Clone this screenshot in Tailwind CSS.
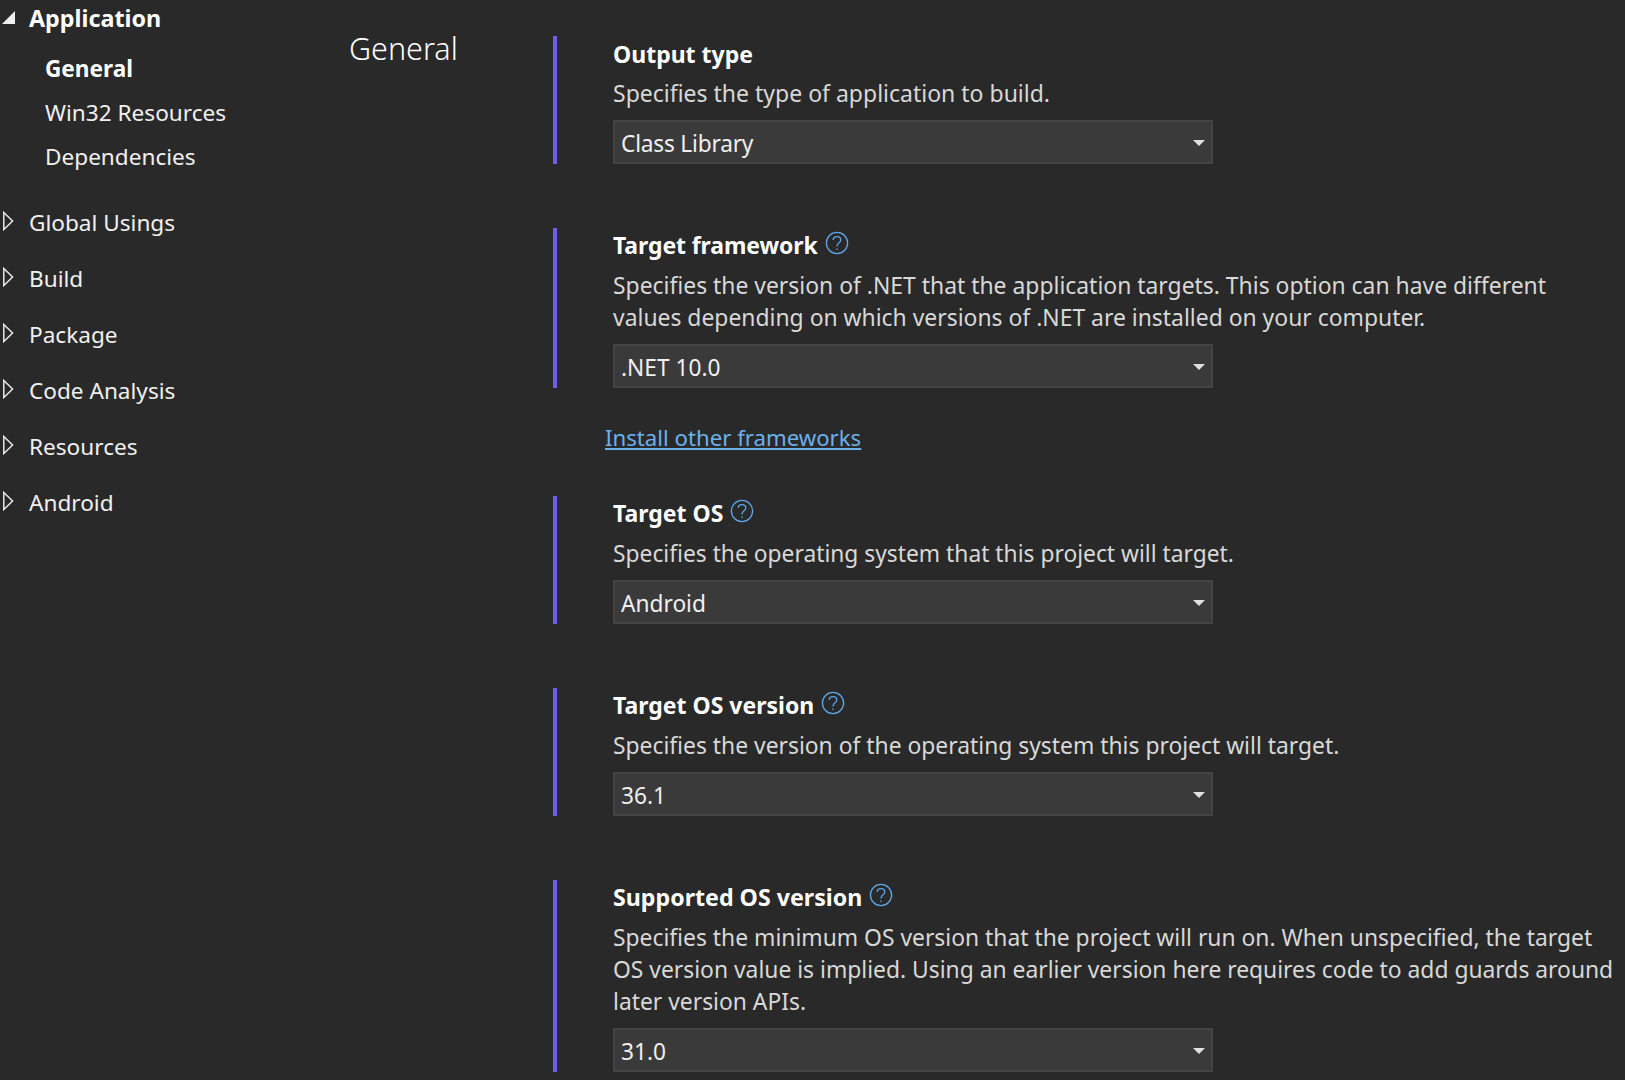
<!DOCTYPE html>
<html lang="en">
  <head>
    <meta charset="UTF-8" />
    <title>Project properties - General</title>
    <script src="https://cdn.jsdelivr.net/npm/@tailwindcss/browser@4"></script>
  </head>
  <body class="bg-[#292929] h-[1080px] overflow-hidden font-['Noto_Sans',sans-serif] text-[23px] text-[#f0f0f0]">
    <div class="flex h-full">
      <!-- tree -->
      <nav class="w-[349px] shrink-0 leading-[44px] text-[22.6px]">
        <div class="flex items-center h-[36px] font-bold text-white text-[23.3px]">
          <svg class="w-[29px] h-[16px] shrink-0 mb-[3px]" viewBox="0 0 29 16"><path d="M2 15 L15 2 V15 Z" fill="#f0f0f0" /></svg>
          Application
        </div>
        <div class="pl-[45px] mt-[11px]">
          <div class="font-bold text-white">General</div>
          <div>Win32 Resources</div>
          <div>Dependencies</div>
        </div>
        <div class="mt-[22px] space-y-[12px]">
          <div class="flex items-center">
            <svg class="w-[29px] h-[20px] shrink-0 mb-[4px]" viewBox="0 0 29 20"><path d="M3.8 1.5 L12.6 10 L3.8 18.5 Z" fill="none" stroke="#e8e8e8" stroke-width="1.5" /></svg>
            Global Usings
          </div>
          <div class="flex items-center">
            <svg class="w-[29px] h-[20px] shrink-0 mb-[4px]" viewBox="0 0 29 20"><path d="M3.8 1.5 L12.6 10 L3.8 18.5 Z" fill="none" stroke="#e8e8e8" stroke-width="1.5" /></svg>
            Build
          </div>
          <div class="flex items-center">
            <svg class="w-[29px] h-[20px] shrink-0 mb-[4px]" viewBox="0 0 29 20"><path d="M3.8 1.5 L12.6 10 L3.8 18.5 Z" fill="none" stroke="#e8e8e8" stroke-width="1.5" /></svg>
            Package
          </div>
          <div class="flex items-center">
            <svg class="w-[29px] h-[20px] shrink-0 mb-[4px]" viewBox="0 0 29 20"><path d="M3.8 1.5 L12.6 10 L3.8 18.5 Z" fill="none" stroke="#e8e8e8" stroke-width="1.5" /></svg>
            Code Analysis
          </div>
          <div class="flex items-center">
            <svg class="w-[29px] h-[20px] shrink-0 mb-[4px]" viewBox="0 0 29 20"><path d="M3.8 1.5 L12.6 10 L3.8 18.5 Z" fill="none" stroke="#e8e8e8" stroke-width="1.5" /></svg>
            Resources
          </div>
          <div class="flex items-center">
            <svg class="w-[29px] h-[20px] shrink-0 mb-[4px]" viewBox="0 0 29 20"><path d="M3.8 1.5 L12.6 10 L3.8 18.5 Z" fill="none" stroke="#e8e8e8" stroke-width="1.5" /></svg>
            Android
          </div>
        </div>
      </nav>

      <!-- page title -->
      <h1 class="w-[204px] shrink-0 pt-[24px] text-[30.5px] leading-[48px] font-light text-white">General</h1>

      <!-- settings -->
      <main class="pt-[36px] min-w-0 flex-1 leading-[32px]">
        <section class="border-l-4 border-[#6f5fe8] pl-[56px] h-[128px]">
          <div class="flex items-center font-bold text-white h-[35px]">Output type</div>
          <p class="text-[#d8d8d8] h-[49px] pt-[6px]">Specifies the type of application to build.</p>
          <div class="flex items-center justify-between w-[600px] h-[44px] bg-[#3a3a3a] border-2 border-[#444444] pl-[6px] pr-[6px] text-[22.7px]">
            <span class="pt-[4px] tracking-[-0.2px]">Class Library</span>
            <svg class="w-[12px] h-[6px] mt-[2px]" viewBox="0 0 12 6"><path d="M0 0 H12 L6 6 Z" fill="#e0e0e0" /></svg>
          </div>
        </section>

        <section class="mt-[64px] border-l-4 border-[#6f5fe8] pl-[56px] h-[160px]">
          <div class="flex items-center gap-[7px] font-bold text-white h-[34px] tracking-[-0.1px]">
            Target framework
            <svg class="w-[24px] h-[24px] mb-[4px]" viewBox="0 0 24 24" fill="none" stroke="#5ea6e6" stroke-width="1.3"><circle cx="12" cy="12" r="10.6" /><path d="M8.2 9 C8.2 4.4 15.8 4.4 15.8 9 C15.8 12 12 11.8 12 15.4" /><path d="M12 17.6 V19" /></svg>
          </div>
          <p class="text-[#d8d8d8] h-[82px] pt-[8px] text-[22.9px]">Specifies the version of .NET that the application targets. This option can have different<br />values depending on which versions of .NET are installed on your computer.</p>
          <div class="flex items-center justify-between w-[600px] h-[44px] bg-[#3a3a3a] border-2 border-[#444444] pl-[6px] pr-[6px] text-[22.7px]">
            <span class="pt-[4px]">.NET 10.0</span>
            <svg class="w-[12px] h-[6px] mt-[2px]" viewBox="0 0 12 6"><path d="M0 0 H12 L6 6 Z" fill="#e0e0e0" /></svg>
          </div>
        </section>

        <a class="block ml-[52px] mt-[34px] h-[74px] text-[22.2px] text-[#6cb0ea] underline underline-offset-2">Install other frameworks</a>

        <section class="border-l-4 border-[#6f5fe8] pl-[56px] h-[128px]">
          <div class="flex items-center gap-[7px] font-bold text-white h-[34px]">
            Target OS
            <svg class="w-[24px] h-[24px] mb-[4px]" viewBox="0 0 24 24" fill="none" stroke="#5ea6e6" stroke-width="1.3"><circle cx="12" cy="12" r="10.6" /><path d="M8.2 9 C8.2 4.4 15.8 4.4 15.8 9 C15.8 12 12 11.8 12 15.4" /><path d="M12 17.6 V19" /></svg>
          </div>
          <p class="text-[#d8d8d8] h-[50px] pt-[8px] text-[22.8px]">Specifies the operating system that this project will target.</p>
          <div class="flex items-center justify-between w-[600px] h-[44px] bg-[#3a3a3a] border-2 border-[#444444] pl-[6px] pr-[6px] text-[22.7px]">
            <span class="pt-[4px]">Android</span>
            <svg class="w-[12px] h-[6px] mt-[2px]" viewBox="0 0 12 6"><path d="M0 0 H12 L6 6 Z" fill="#e0e0e0" /></svg>
          </div>
        </section>

        <section class="mt-[64px] border-l-4 border-[#6f5fe8] pl-[56px] h-[128px]">
          <div class="flex items-center gap-[7px] font-bold text-white h-[34px]">
            Target OS version
            <svg class="w-[24px] h-[24px] mb-[4px]" viewBox="0 0 24 24" fill="none" stroke="#5ea6e6" stroke-width="1.3"><circle cx="12" cy="12" r="10.6" /><path d="M8.2 9 C8.2 4.4 15.8 4.4 15.8 9 C15.8 12 12 11.8 12 15.4" /><path d="M12 17.6 V19" /></svg>
          </div>
          <p class="text-[#d8d8d8] h-[50px] pt-[8px] text-[22.85px]">Specifies the version of the operating system this project will target.</p>
          <div class="flex items-center justify-between w-[600px] h-[44px] bg-[#3a3a3a] border-2 border-[#444444] pl-[6px] pr-[6px] text-[22.7px]">
            <span class="pt-[4px]">36.1</span>
            <svg class="w-[12px] h-[6px] mt-[2px]" viewBox="0 0 12 6"><path d="M0 0 H12 L6 6 Z" fill="#e0e0e0" /></svg>
          </div>
        </section>

        <section class="mt-[64px] border-l-4 border-[#6f5fe8] pl-[56px] h-[192px]">
          <div class="flex items-center gap-[7px] font-bold text-white h-[34px] text-[23.2px]">
            Supported OS version
            <svg class="w-[24px] h-[24px] mb-[4px]" viewBox="0 0 24 24" fill="none" stroke="#5ea6e6" stroke-width="1.3"><circle cx="12" cy="12" r="10.6" /><path d="M8.2 9 C8.2 4.4 15.8 4.4 15.8 9 C15.8 12 12 11.8 12 15.4" /><path d="M12 17.6 V19" /></svg>
          </div>
          <p class="text-[#d8d8d8] h-[114px] pt-[8px] text-[22.85px]">Specifies the minimum OS version that the project will run on. When unspecified, the target<br />OS version value is implied. Using an earlier version here requires code to add guards around<br />later version APIs.</p>
          <div class="flex items-center justify-between w-[600px] h-[44px] bg-[#3a3a3a] border-2 border-[#444444] pl-[6px] pr-[6px] text-[22.7px]">
            <span class="pt-[4px]">31.0</span>
            <svg class="w-[12px] h-[6px] mt-[2px]" viewBox="0 0 12 6"><path d="M0 0 H12 L6 6 Z" fill="#e0e0e0" /></svg>
          </div>
        </section>
      </main>
    </div>
  </body>
</html>
